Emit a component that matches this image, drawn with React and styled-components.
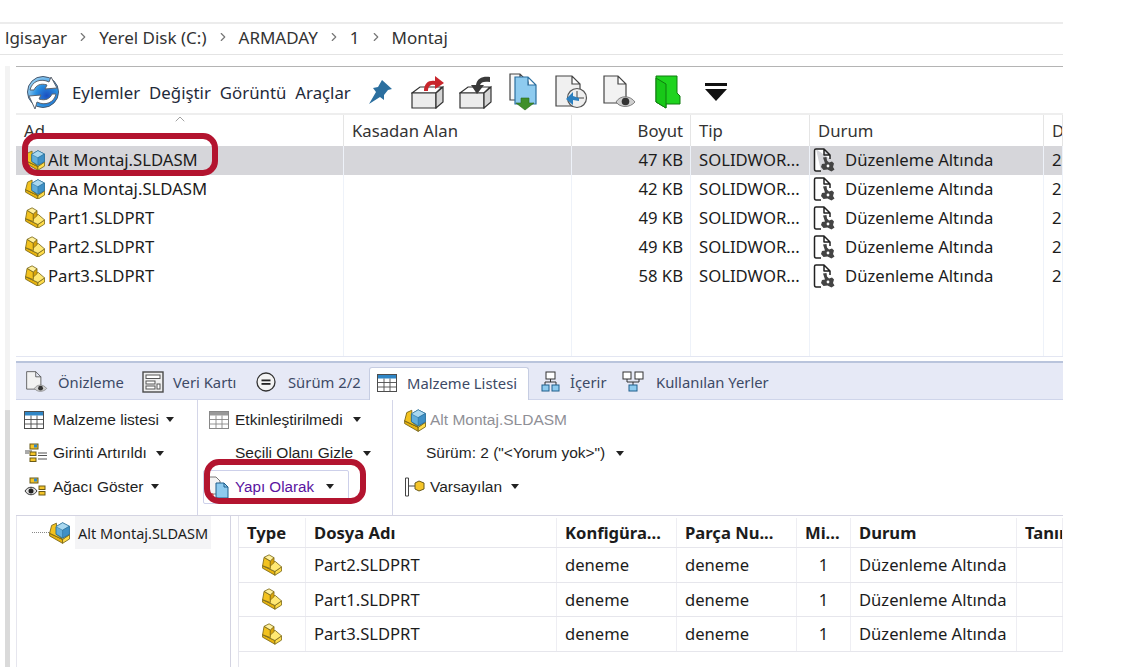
import React from 'react'
import styled, { createGlobalStyle } from 'styled-components'
import { ChevronRight, ChevronUp } from 'lucide-react'

const Global = createGlobalStyle`
  html, body { margin: 0; padding: 0; background: #fff; }
  body { font-family: "Noto Sans", "Open Sans", sans-serif; color: #1c1c1c; }
  * { box-sizing: border-box; }
`

const Page = styled.div`
  position: relative;
  width: 1127px;
  height: 667px;
  overflow: hidden;
  background: #fff;
`

const Main = styled.div`
  width: 1063px;
  height: 667px;
  padding-top: 22px;
  display: flex;
  flex-direction: column;
`

const AddressBar = styled.div`
  height: 33px;
  border-top: 2px solid #ececec;
  border-bottom: 1px solid #e4e4e4;
  padding: 0 0 4px 5px;
  display: flex;
  align-items: center;
  gap: 9px;
  font-size: 17px;
  color: #333;
`

const Crumb = styled.span`
  white-space: nowrap;
`

const Vault = styled.div`
  margin: 11px 0 0 5px;
  flex: 1;
  display: flex;
  min-height: 0;
`

const Strip = styled.div`
  width: 5px;
  margin-right: 6px;
  background: linear-gradient(#f3f3f3 0, #f3f3f3 344px, #dadada 344px, #dadada 100%);
`

const Content = styled.div`
  flex: 1;
  min-width: 0;
  display: flex;
  flex-direction: column;
`

const Toolbar = styled.div`
  height: 49px;
  border-top: 1px solid #b4b4b4;
  border-bottom: 2px solid #eeeeee;
  padding: 4px 0 0 10px;
  display: flex;
  align-items: center;
`

const Menu = styled.div`
  display: flex;
  gap: 9px;
  margin-left: 12px;
  width: 284px;
  flex: none;
  font-size: 16.8px;
  color: #1f2a3a;
`

const ToolButton = styled.div`
  width: 48px;
  display: flex;
  justify-content: center;
  align-items: center;
`

const listColumns = '328px 228px 119px 119px 234px 19px'

const ListRow = styled.div`
  display: grid;
  grid-template-columns: ${listColumns};
  height: ${(p) => p.$height || 29}px;
  background: ${(p) => (p.$selected ? '#d6d6da' : 'transparent')};
  border-bottom: ${(p) => (p.$filler ? '1px solid #e3e6f2' : 'none')};
  font-size: 16.7px;
`

const ListCell = styled.div`
  position: relative;
  display: flex;
  align-items: center;
  justify-content: ${(p) => (p.$right ? 'flex-end' : 'flex-start')};
  gap: ${(p) => p.$gap || 0}px;
  padding: ${(p) => (p.$right ? '0 7px 0 0' : `0 0 0 ${p.$pad ?? 8}px`)};
  padding-bottom: ${(p) => (p.$head ? 0 : 2)}px;
  border-right: 1px solid ${(p) => (p.$head ? '#e5e5e5' : '#eef2f9')};
  white-space: nowrap;
  overflow: hidden;
  color: ${(p) => (p.$head ? '#333' : '#1c1c1c')};
`

const SortMark = styled.span`
  position: absolute;
  left: 156px;
  top: -4px;
  color: #8a8a8a;
  display: flex;
`

const Tabs = styled.div`
  margin-top: 4px;
  height: 39px;
  border-top: 2px solid #b9c4dc;
  background: #e6e9f6;
  border-bottom: 1px solid #cfd5ea;
  padding-left: 10px;
  display: flex;
  align-items: flex-end;
  font-size: 14.8px;
  color: #3d4a66;
`

const Tab = styled.div`
  height: 33px;
  width: ${(p) => p.$width}px;
  flex: none;
  display: flex;
  align-items: center;
  gap: ${(p) => p.$gap}px;
  padding-left: ${(p) => p.$pad || 0}px;
  padding-bottom: 2px;
  white-space: nowrap;
  ${(p) =>
    p.$active &&
    `
    background: #fff;
    border: 1px solid #c6cde2;
    border-bottom: none;
    border-radius: 3px 3px 0 0;
    margin-bottom: -1px;
  `}
`

const Controls = styled.div`
  height: 116px;
  display: grid;
  grid-template-columns: 182px 195px 1fr;
  border-bottom: 1px solid #d4d4e2;
`

const ControlGroup = styled.div`
  border-right: ${(p) => (p.$last ? 'none' : '1px solid #d4d6e8')};
  padding: 3px 0 0 ${(p) => p.$pad}px;
  display: flex;
  flex-direction: column;
`

const ControlRow = styled.div`
  height: 33.5px;
  display: flex;
  align-items: center;
  gap: ${(p) => p.$gap ?? 5}px;
  padding-left: ${(p) => p.$indent || 0}px;
  font-family: "Liberation Sans", Arial, sans-serif;
  font-size: 15.5px;
  white-space: nowrap;
  color: ${(p) => p.$color || '#1f1f1f'};
`

const PressedRow = styled(ControlRow)`
  position: relative;
  width: 146px;
  margin-left: -6px;
  padding-left: 3px;
  border: 1px solid #cdd0ea;
  border-radius: 2px;
  font-size: 15.2px;
`

const Caret = styled.i`
  width: 0;
  height: 0;
  margin-left: ${(p) => p.$gap ?? 7}px;
  border-left: 4.5px solid transparent;
  border-right: 4.5px solid transparent;
  border-top: 5px solid #222;
`

const Lower = styled.div`
  flex: 1;
  min-height: 0;
  display: flex;
`

const Tree = styled.div`
  width: 215px;
  flex: none;
  border-right: 1px solid #d4d4e2;
  border-left: 1px solid #e6e6ee;
  padding-left: 15px;
  font-size: 14.5px;
`

const TreeRow = styled.div`
  height: 33px;
  display: flex;
  align-items: center;
`

const TreeDots = styled.span`
  width: 17px;
  border-top: 1px dotted #888;
`

const TreeLabel = styled.span`
  height: 33px;
  margin-left: 5px;
  padding: 0 3px;
  background: #f4f4f6;
  display: flex;
  align-items: center;
  white-space: nowrap;
`

const Grid = styled.div`
  margin-left: 7px;
  flex: 1;
  min-width: 0;
  border-left: 1px solid #e4e4ec;
`

const gridColumns = '67px 251px 120px 120px 54px 166px 46px'

const GridRow = styled.div`
  display: grid;
  grid-template-columns: ${gridColumns};
  height: ${(p) => p.$height}px;
  padding-top: ${(p) => (p.$head ? 2 : 0)}px;
  border-bottom: 1px solid #e6e6ec;
  font-size: 16.6px;
  font-weight: ${(p) => (p.$head ? 700 : 400)};
`

const GridCell = styled.div`
  display: flex;
  align-items: center;
  justify-content: ${(p) => p.$align || 'flex-start'};
  padding: ${(p) => (p.$align ? '0' : '0 0 0 8px')};
  border-right: 1px solid #eeeef3;
  white-space: nowrap;
  overflow: hidden;
`

const Annotation = styled.div`
  position: absolute;
  left: ${(p) => p.$x}px;
  top: ${(p) => p.$y}px;
  width: ${(p) => p.$w}px;
  height: ${(p) => p.$h}px;
  border: 6px solid #b3142f;
  border-radius: 15px;
  pointer-events: none;
`

const olive = '#7a6718'

// base of the block: long left side, right side, shelf on top
const Slab = () => (
  <>
    <path d="M.7 14L15.500 21V25.500L.7 17Z" fill="#e8b30e" stroke={olive} strokeWidth="1" strokeLinejoin="round" />
    <path d="M15.500 21L23.500 15.500V20.500L15.500 25.500Z" fill="#ffdc4a" stroke={olive} strokeWidth="1" strokeLinejoin="round" />
    <path d="M.7 14L9 10L16 9L23.500 15.500L15.500 21Z" fill="#ffe873" stroke={olive} strokeWidth="1" strokeLinejoin="round" />
  </>
)

const Part = ({ size = 22 }) => (
  <svg width={size} height={(size * 26) / 24} viewBox="0 0 24 26">
    <Slab />
    <path d="M.7 14L2.500 4L10 8.500V17.500Z" fill="#f3c21f" stroke={olive} strokeWidth="1" strokeLinejoin="round" />
    <path d="M2.500 4L8.500 1L14.500 4.500L10 8.500Z" fill="#fff09c" stroke={olive} strokeWidth="1" strokeLinejoin="round" />
    <path d="M10 8.500L14.500 4.500V10.500L10 14.500Z" fill="#d9a40a" stroke={olive} strokeWidth=".8" strokeLinejoin="round" />
  </svg>
)

const Assembly = ({ size = 22 }) => (
  <svg width={size} height={(size * 26) / 24} viewBox="0 0 24 26">
    <Slab />
    <path d="M.7 14L3 5L8.500 2.500V15L15.500 21L.7 14Z" fill="#f3c21f" stroke={olive} strokeWidth="1" strokeLinejoin="round" />
    <path d="M8 6.500L15.500 2L23.300 6V15L15.500 19.500L8 15Z" fill="#62aedb" stroke="#276b94" strokeWidth="1" strokeLinejoin="round" />
    <path d="M8 6.500L15.500 10.500L23.300 6L15.500 2Z" fill="#a9d8f0" stroke="#276b94" strokeWidth=".6" />
    <path d="M15.500 10.500V19.500L23.300 15V6Z" fill="#3f90c6" stroke="#276b94" strokeWidth=".6" />
  </svg>
)

const Refresh = () => (
  <svg width="34" height="36" viewBox="0 0 34 36">
    <defs>
      <radialGradient id="globe" cx=".62" cy=".62" r=".7">
        <stop offset="0" stopColor="#1c4fc0" />
        <stop offset=".5" stopColor="#2a8fe0" />
        <stop offset="1" stopColor="#a5d8f5" />
      </radialGradient>
    </defs>
    <circle cx="17" cy="18" r="15.500" fill="url(#globe)" stroke="#44566e" strokeWidth="1" />
    <path d="M4 16C6 7 15 4 23 8L25 3L31 14L19 15L21 11C15 9 10 11 8 16Z" fill="#fff" stroke="#5b6470" strokeWidth="1" strokeLinejoin="round" />
    <path d="M30 20C28 29 19 32 11 28L9 35L3 22L15 21L13 25C19 27 24 25 26 20Z" fill="#fff" stroke="#5b6470" strokeWidth="1" strokeLinejoin="round" />
  </svg>
)

const Pin = () => (
  <svg width="26" height="26" viewBox="0 0 26 26">
    <path d="M15 1L25 10L21 11L17 16L17 21L13 18L2 25L9 13L6 9L11 8Z" fill="#2b6f9f" />
  </svg>
)

const BoxIcon = ({ arrow, out }) => (
  <svg width="34" height="34" viewBox="0 0 34 34">
    <path d="M1 18L9 12H31L25 18Z" fill="#fff" stroke="#333" strokeWidth="1.200" />
    <path d="M1 18H25V33H1Z" fill="#ececec" stroke="#333" strokeWidth="1.200" />
    <path d="M25 18L32 12V27L25 33Z" fill="#d5d5d5" stroke="#333" strokeWidth="1.200" />
    {out ? (
      <path d="M13 16C13 8 18 5 24 6V1L33 8L24 14V10C19 9 17 12 17 16Z" fill={arrow} />
    ) : (
      <path d="M31 2C24 1 18 3 17 10H12L18 19L25 10H21C22 7 25 6 31 7Z" fill={arrow} />
    )}
  </svg>
)

const Sheet = ({ x = 1, y = 1, w = 22, h = 30, fill = '#f4f4f4', stroke = '#444' }) => (
  <path
    d={`M${x} ${y}H${x + w - 8}L${x + w} ${y + 8}V${y + h}H${x}Z M${x + w - 8} ${y}V${y + 8}H${x + w}`}
    fill={fill}
    stroke={stroke}
    strokeWidth="1.200"
  />
)

const DocDown = () => (
  <svg width="30" height="38" viewBox="0 0 30 38">
    <Sheet x={1} y={1} w={18} h={26} fill="#f6f6f6" />
    <Sheet x={6} y={4} w={21} h={27} fill="#8ecbef" stroke="#2b6f9f" />
    <path d="M12 25H20V30H25L16 37L7 30H12Z" fill="#3f8f2a" stroke="#2c6a1c" strokeWidth=".6" />
  </svg>
)

const DocClock = () => (
  <svg width="34" height="36" viewBox="0 0 34 36">
    <Sheet x={1} y={2} w={24} h={30} fill="#f0f0f0" />
    <circle cx="22" cy="24" r="9.500" fill="#efefef" stroke="#555" strokeWidth="1.200" />
    <path d="M22 17V24H29" stroke="#444" strokeWidth="1" fill="none" />
    <path d="M11 25L18 18V22L24 24V27L18 26V31Z" fill="#2b7fbf" />
  </svg>
)

const DocEye = ({ size = 34 }) => (
  <svg width={size} height={size} viewBox="0 0 34 34">
    <Sheet x={1} y={1} w={22} h={27} fill="#f2f2f2" />
    <path d="M13 27C17 20 27 20 32 27C27 33 17 33 13 27Z" fill="#d0d0d0" stroke="#666" strokeWidth=".8" />
    <circle cx="22.500" cy="26.500" r="3.800" fill="#333" />
  </svg>
)

const Folder = () => (
  <svg width="26" height="34" viewBox="0 0 26 34">
    <path d="M1 1H22V18L25 21V29H11V33L1 27Z" fill="#1fd41f" stroke="#0f7d0f" strokeWidth="1" strokeLinejoin="round" />
    <path d="M1 3L11 9V33L1 27Z" fill="#18c818" stroke="#0f7d0f" strokeWidth="1" strokeLinejoin="round" />
  </svg>
)

const DropBar = () => (
  <svg width="24" height="20" viewBox="0 0 24 20">
    <rect x="1" y="1" width="22" height="3" fill="#111" />
    <path d="M1 7H23L12 19Z" fill="#111" />
  </svg>
)

const DocWrench = () => (
  <svg width="22" height="24" viewBox="0 0 22 24">
    <path d="M3 1H11L17 7V11M8 23H3C2 23 1.500 22 1.500 21V2.500C1.500 2 2 1 3 1M11 1V7H17" fill="#fff" stroke="#222" strokeWidth="1.500" strokeLinejoin="round" />
    <path d="M10 9.500L13.500 9L14 12.500L16 14.500L19 13.500L21 15.500L20 19L21.500 21.500L18.500 23.500L14.500 21.500L10.500 22L8 19L9 16L12 15.500L11 12.500Z" fill="#444" />
    <circle cx="15" cy="18" r="1.400" fill="#fff" />
  </svg>
)

const TableIcon = ({ color = '#4d4d4d', head = '#2f86c6', size = 20 }) => (
  <svg width={size} height={size} viewBox="0 0 20 20">
    <rect x=".5" y="1.500" width="19" height="17" fill="#fff" stroke={color} />
    <rect x="1" y="2" width="18" height="3.500" fill={head} />
    <path d="M1 9.500H19M1 14H19M7 5.500V18M13 5.500V18" stroke={color} strokeWidth=".9" />
  </svg>
)

const CardIcon = () => (
  <svg width="22" height="22" viewBox="0 0 22 22">
    <rect x="1" y="1" width="20" height="20" fill="#efefef" stroke="#4a4a4a" strokeWidth="1.400" />
    <rect x="4" y="4" width="14" height="3.500" fill="#fff" stroke="#555" />
    <rect x="4" y="10" width="9" height="3" fill="#fff" stroke="#555" />
    <rect x="4" y="15" width="9" height="3" fill="#fff" stroke="#555" />
    <rect x="15" y="13" width="3" height="5" fill="#fff" stroke="#555" />
  </svg>
)

const RevisionIcon = () => (
  <svg width="20" height="20" viewBox="0 0 20 20">
    <circle cx="10" cy="10" r="9" fill="#f3f3f3" stroke="#333" strokeWidth="1.300" />
    <rect x="5.500" y="7.500" width="9" height="1.800" fill="#222" />
    <rect x="5.500" y="11" width="9" height="1.800" fill="#222" />
  </svg>
)

const ContainsIcon = () => (
  <svg width="19" height="21" viewBox="0 0 19 21">
    <rect x="5" y="1" width="9" height="7" fill="#fff" stroke="#333" />
    <path d="M9.500 8V11M4 14V11H15V14" stroke="#333" fill="none" />
    <rect x="1" y="14" width="7" height="6" fill="#8ecbef" stroke="#1f5f8c" />
    <rect x="11" y="14" width="7" height="6" fill="#8ecbef" stroke="#1f5f8c" />
  </svg>
)

const UsedIcon = () => (
  <svg width="22" height="21" viewBox="0 0 22 21">
    <rect x="1" y="1" width="8" height="7" fill="#fff" stroke="#333" />
    <rect x="13" y="1" width="8" height="7" fill="#fff" stroke="#333" />
    <path d="M5 8V11H17V8M11 11V14" stroke="#333" fill="none" />
    <rect x="7" y="14" width="8" height="6" fill="#8ecbef" stroke="#1f5f8c" />
  </svg>
)

const IndentIcon = ({ eye }) => (
  <svg width="24" height="20" viewBox="0 0 24 20">
    <rect x="6" y="1" width="8" height="5" fill="#f5c529" stroke="#6a5a18" />
    <rect x="10" y="1.500" width="3" height="3" fill="#2f86c6" />
    {eye ? (
      <>
        <path d="M1 14C4 9 10 9 13 14C10 19 4 19 1 14Z" fill="#ddd" stroke="#333" />
        <circle cx="7" cy="14" r="2.500" fill="#222" />
        <rect x="15" y="9" width="6" height="3.500" fill="#f5c529" stroke="#6a5a18" />
        <rect x="15" y="14.500" width="6" height="3.500" fill="#f5c529" stroke="#6a5a18" />
      </>
    ) : (
      <>
        <path d="M1 8H8M1 10H5M14 10H23M14 12.500H23M14 16H23" stroke="#555" />
        <rect x="6" y="9" width="6" height="3.500" fill="#f5c529" stroke="#6a5a18" />
        <rect x="6" y="15" width="6" height="3.500" fill="#f5c529" stroke="#6a5a18" />
      </>
    )}
  </svg>
)

const StructureIcon = () => (
  <svg width="24" height="24" viewBox="0 0 24 24">
    <path d="M1 2H9L13 6V19H1Z" fill="#f4f4f4" stroke="#777" />
    <path d="M1 19H6V22H1Z" fill="none" stroke="#e02020" />
    <path d="M9 8H17L21 12V23H9Z" fill="#8ecbef" stroke="#1f5f8c" />
    <path d="M17 8V12H21" fill="none" stroke="#1f5f8c" />
  </svg>
)

const ConfigIcon = () => (
  <svg width="21" height="20" viewBox="0 0 21 20">
    <path d="M1.500 1V19M4.500 1V19M1.500 1H4.500M1.500 19H4.500" stroke="#444" fill="none" />
    <path d="M4.500 9H11" stroke="#444" />
    <path d="M11 6L15 4L20 6V12L15 14L11 12Z" fill="#f5c529" stroke="#6a5a18" />
  </svg>
)

const files = [
  { name: 'Alt Montaj.SLDASM', size: '47 KB', asm: true, selected: true },
  { name: 'Ana Montaj.SLDASM', size: '42 KB', asm: true },
  { name: 'Part1.SLDPRT', size: '49 KB' },
  { name: 'Part2.SLDPRT', size: '49 KB' },
  { name: 'Part3.SLDPRT', size: '58 KB' },
]

const parts = ['Part2.SLDPRT', 'Part1.SLDPRT', 'Part3.SLDPRT']

export default function App() {
  return (
    <Page>
      <Global />
      <Main>
        <AddressBar>
          <Crumb>lgisayar</Crumb>
          <ChevronRight size={14} color="#777" />
          <Crumb>Yerel Disk (C:)</Crumb>
          <ChevronRight size={14} color="#777" />
          <Crumb>ARMADAY</Crumb>
          <ChevronRight size={14} color="#777" />
          <Crumb>1</Crumb>
          <ChevronRight size={14} color="#777" />
          <Crumb>Montaj</Crumb>
        </AddressBar>
        <Vault>
          <Strip />
          <Content>
            <Toolbar>
              <Refresh />
              <Menu>
                <span>Eylemler</span>
                <span>Değiştir</span>
                <span>Görüntü</span>
                <span>Araçlar</span>
              </Menu>
              <ToolButton><Pin /></ToolButton>
              <ToolButton><BoxIcon out arrow="#c8262c" /></ToolButton>
              <ToolButton><BoxIcon arrow="#3a3a3a" /></ToolButton>
              <ToolButton><DocDown /></ToolButton>
              <ToolButton><DocClock /></ToolButton>
              <ToolButton><DocEye /></ToolButton>
              <ToolButton><Folder /></ToolButton>
              <ToolButton><DropBar /></ToolButton>
            </Toolbar>
            <ListRow $height={31}>
              <ListCell $head>
                Ad
                <SortMark><ChevronUp size={16} strokeWidth={1.2} /></SortMark>
              </ListCell>
              <ListCell $head>Kasadan Alan</ListCell>
              <ListCell $head $right>Boyut</ListCell>
              <ListCell $head>Tip</ListCell>
              <ListCell $head>Durum</ListCell>
              <ListCell $head>D</ListCell>
            </ListRow>
            {files.map((f) => (
              <ListRow key={f.name} $selected={f.selected}>
                <ListCell $gap={3} $pad={9}>
                  {f.asm ? <Assembly size={20} /> : <Part size={20} />}
                  {f.name}
                </ListCell>
                <ListCell />
                <ListCell $right>{f.size}</ListCell>
                <ListCell>SOLIDWOR...</ListCell>
                <ListCell $pad={3} $gap={10}>
                  <DocWrench />
                  Düzenleme Altında
                </ListCell>
                <ListCell>2021</ListCell>
              </ListRow>
            ))}
            <ListRow $filler $height={66}>
              <ListCell />
              <ListCell />
              <ListCell />
              <ListCell />
              <ListCell />
              <ListCell />
            </ListRow>
            <Tabs>
              <Tab $width={116} $gap={10}><DocEye size={22} />Önizleme</Tab>
              <Tab $width={114} $gap={9}><CardIcon />Veri Kartı</Tab>
              <Tab $width={113} $gap={12}><RevisionIcon />Sürüm 2/2</Tab>
              <Tab $active $width={160} $gap={10} $pad={7}><TableIcon />Malzeme Listesi</Tab>
              <Tab $width={93} $gap={10} $pad={12}><ContainsIcon />İçerir</Tab>
              <Tab $width={200} $gap={12}><UsedIcon />Kullanılan Yerler</Tab>
            </Tabs>
            <Controls>
              <ControlGroup $pad={8}>
                <ControlRow $gap={9}><TableIcon />Malzeme listesi<Caret $gap={-1.5} /></ControlRow>
                <ControlRow><IndentIcon />Girinti Artırıldı<Caret $gap={4.5} /></ControlRow>
                <ControlRow><IndentIcon eye />Ağacı Göster<Caret $gap={2.5} /></ControlRow>
              </ControlGroup>
              <ControlGroup $pad={11}>
                <ControlRow $gap={6}><TableIcon color="#888" head="#999" />Etkinleştirilmedi<Caret $gap={4.5} /></ControlRow>
                <ControlRow $indent={26}>Seçili Olanı Gizle<Caret $gap={4.5} /></ControlRow>
                <PressedRow $color="#5a14a0" $gap={4}><StructureIcon />Yapı Olarak<Caret $gap={7.5} /></PressedRow>
              </ControlGroup>
              <ControlGroup $pad={11} $last>
                <ControlRow $color="#8f8f96" $gap={4}><Assembly size={22} />Alt Montaj.SLDASM</ControlRow>
                <ControlRow $indent={22}>Sürüm: 2 ("&lt;Yorum yok&gt;")<Caret $gap={5.5} /></ControlRow>
                <ControlRow $gap={5}><ConfigIcon />Varsayılan<Caret $gap={3.5} /></ControlRow>
              </ControlGroup>
            </Controls>
            <Lower>
              <Tree>
                <TreeRow>
                  <TreeDots />
                  <Assembly size={21} />
                  <TreeLabel>Alt Montaj.SLDASM</TreeLabel>
                </TreeRow>
              </Tree>
              <Grid>
                <GridRow $head $height={32}>
                  <GridCell>Type</GridCell>
                  <GridCell>Dosya Adı</GridCell>
                  <GridCell>Konfigüra...</GridCell>
                  <GridCell>Parça Nu...</GridCell>
                  <GridCell>Mi...</GridCell>
                  <GridCell>Durum</GridCell>
                  <GridCell>Tanım</GridCell>
                </GridRow>
                {parts.map((p) => (
                  <GridRow key={p} $height={34.5}>
                    <GridCell $align="center"><Part size={20} /></GridCell>
                    <GridCell>{p}</GridCell>
                    <GridCell>deneme</GridCell>
                    <GridCell>deneme</GridCell>
                    <GridCell $align="center">1</GridCell>
                    <GridCell>Düzenleme Altında</GridCell>
                    <GridCell />
                  </GridRow>
                ))}
              </Grid>
            </Lower>
          </Content>
        </Vault>
      </Main>
      <Annotation $x={22} $y={133} $w={196} $h={43} />
      <Annotation $x={204} $y={459} $w={162} $h={45} />
    </Page>
  )
}
